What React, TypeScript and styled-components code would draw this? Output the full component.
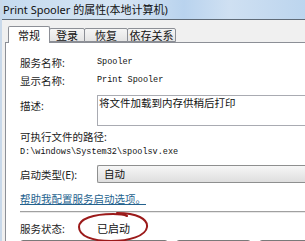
import { createGlobalStyle, styled } from "styled-components";

const GlobalStyle = createGlobalStyle`
  html, body {
    margin: 0;
    padding: 0;
    width: 305px;
    height: 241px;
    overflow: hidden;
    background: #f0f0f0;
  }
  * {
    box-sizing: border-box;
  }
`;

const CJK = `"Noto Sans", "Noto Sans CJK SC", sans-serif`;
const MONO = `"Liberation Mono", "Noto Sans CJK SC", monospace`;

const tabs = [
  { label: "常规", width: 42, active: true },
  { label: "登录", width: 36 },
  { label: "恢复", width: 44 },
  { label: "依存关系", width: 49 },
];

const App = () => {
  return (
    <Window>
      <GlobalStyle />
      <TitleBar>Print Spooler 的属性(本地计算机)</TitleBar>
      <Body>
        <TabStrip>
          {tabs.map((t) => (
            <Tab key={t.label} $width={t.width} $active={!!t.active}>
              {t.label}
            </Tab>
          ))}
        </TabStrip>
        <Panel>
          <Row>
            <Label>服务名称:</Label>
            <Value>Spooler</Value>
          </Row>
          <Row>
            <Label>显示名称:</Label>
            <Value>Print Spooler</Value>
          </Row>
          <DescRow>
            <DescLabel>描述:</DescLabel>
            <DescBox>将文件加载到内存供稍后打印</DescBox>
          </DescRow>
          <PathLabel>可执行文件的路径:</PathLabel>
          <PathValue>D:\windows\System32\spoolsv.exe</PathValue>
          <ComboRow>
            <Label>启动类型(E):</Label>
            <Combo>自动</Combo>
          </ComboRow>
          <HelpLink>帮助我配置服务启动选项。</HelpLink>
          <Separator />
          <StatusRow>
            <Label>服务状态:</Label>
            <StatusValue>
              已启动
              <Circle viewBox="0 0 72 32" width="72" height="32">
                <path
                  d="M40 2 C60 2 71 8 70 16 C69 25 52 30 34 30 C15 30 2 25 2 16 C2 8 16 3 36 3 C44 3 48 4 50 5"
                  fill="none"
                  stroke="#9b1a1a"
                  strokeWidth="2"
                  strokeLinecap="round"
                />
              </Circle>
            </StatusValue>
          </StatusRow>
          <ButtonRow>
            <ActionButton $width={148} />
            <ActionButton $width={75} />
            <ActionButton $width={75} />
          </ButtonRow>
        </Panel>
      </Body>
    </Window>
  );
};

const Window = styled.div`
  width: 305px;
  height: 241px;
  overflow: hidden;
  background: #f0f0f0;
  border-left: 2px solid #c9d9ea;
`;

const TitleBar = styled.div`
  height: 20px;
  padding-left: 1px;
  line-height: 19px;
  font-family: ${CJK};
  font-size: 11px;
  color: #111;
  white-space: nowrap;
  background: linear-gradient(
    90deg,
    #c6dbef 0%,
    #d6e5f4 40%,
    #b9d3ee 60%,
    #cfe0f2 75%,
    #bcd5ee 100%
  );
  border-bottom: 1px solid #5f6b78;
`;

const Body = styled.div`
  padding: 6px 0 0 3px;
`;

const TabStrip = styled.div`
  display: flex;
  align-items: flex-end;
  height: 16px;
  margin-left: 4px;
`;

const Tab = styled.div<{ $width: number; $active: boolean }>`
  width: ${(p) => p.$width}px;
  height: ${(p) => (p.$active ? 17 : 14)}px;
  margin-bottom: ${(p) => (p.$active ? -1 : 0)}px;
  position: relative;
  z-index: ${(p) => (p.$active ? 2 : 1)};
  display: flex;
  align-items: center;
  justify-content: center;
  font-family: ${CJK};
  font-size: 11px;
  color: #111;
  border: 1px solid #8c8f96;
  border-bottom: ${(p) => (p.$active ? "none" : "1px solid #8c8f96")};
  margin-left: -1px;
  background: ${(p) =>
    p.$active ? "#fff" : "linear-gradient(#f5f5f5, #e4e4e4)"};
  border-radius: 2px 2px 0 0;
`;

const Panel = styled.div`
  background: #fff;
  border: 1px solid #8c8f96;
  border-right: none;
  padding: 10px 0 0 14px;
  height: 210px;
  position: relative;
  z-index: 1;
`;

const Row = styled.div`
  display: grid;
  grid-template-columns: 77px 1fr;
  align-items: center;
  height: 18px;
`;

const Label = styled.div`
  font-family: ${CJK};
  font-size: 10.5px;
  color: #222;
  white-space: nowrap;
`;

const Value = styled.div`
  font-family: ${MONO};
  font-size: 8.5px;
  color: #111;
  white-space: nowrap;
`;

const DescRow = styled.div`
  display: grid;
  grid-template-columns: 77px 1fr;
  margin-top: 6px;
`;

const DescLabel = styled(Label)`
  padding-top: 3px;
`;

const DescBox = styled.div`
  height: 31px;
  border: 1px solid #a9abb2;
  border-right: none;
  padding: 0 0 0 1px;
  font-family: ${CJK};
  font-size: 10.5px;
  line-height: 14px;
  color: #111;
  white-space: nowrap;
`;

const PathLabel = styled(Label)`
  margin-top: 4px;
  line-height: 14px;
`;

const PathValue = styled(Value)`
  margin-top: 1px;
  line-height: 14px;
`;

const ComboRow = styled(Row)`
  margin-top: 6px;
`;

const Combo = styled.div`
  height: 18px;
  border: 1px solid #8e8f8f;
  border-right: none;
  border-radius: 2px 0 0 2px;
  background: linear-gradient(#f6f6f6, #dedede);
  padding-left: 6px;
  font-family: ${CJK};
  font-size: 10.5px;
  line-height: 16px;
  color: #111;
`;

const HelpLink = styled.a`
  display: block;
  margin-top: 9px;
  font-family: ${CJK};
  font-size: 10.5px;
  line-height: 14px;
  color: #24628e;
  text-decoration: underline;
  white-space: nowrap;
`;

const Separator = styled.div`
  margin-top: 5px;
  height: 1px;
  background: #a0a0a0;
  box-shadow: 0 1px 0 #e8e8e8;
`;

const StatusRow = styled(Row)`
  margin-top: 8px;
  height: 16px;
`;

const StatusValue = styled.div`
  position: relative;
  font-family: ${CJK};
  font-size: 11px;
  color: #111;
  white-space: nowrap;
`;

const Circle = styled.svg`
  position: absolute;
  left: -20px;
  top: -9px;
`;

const ButtonRow = styled.div`
  display: flex;
  gap: 8px;
  margin-top: 4px;
`;

const ActionButton = styled.div<{ $width: number }>`
  flex: none;
  width: ${(p) => p.$width}px;
  height: 22px;
  border: 1px solid #7a7a7a;
  border-radius: 3px;
  background: linear-gradient(#f2f2f2, #dcdcdc);
`;

export default App;
